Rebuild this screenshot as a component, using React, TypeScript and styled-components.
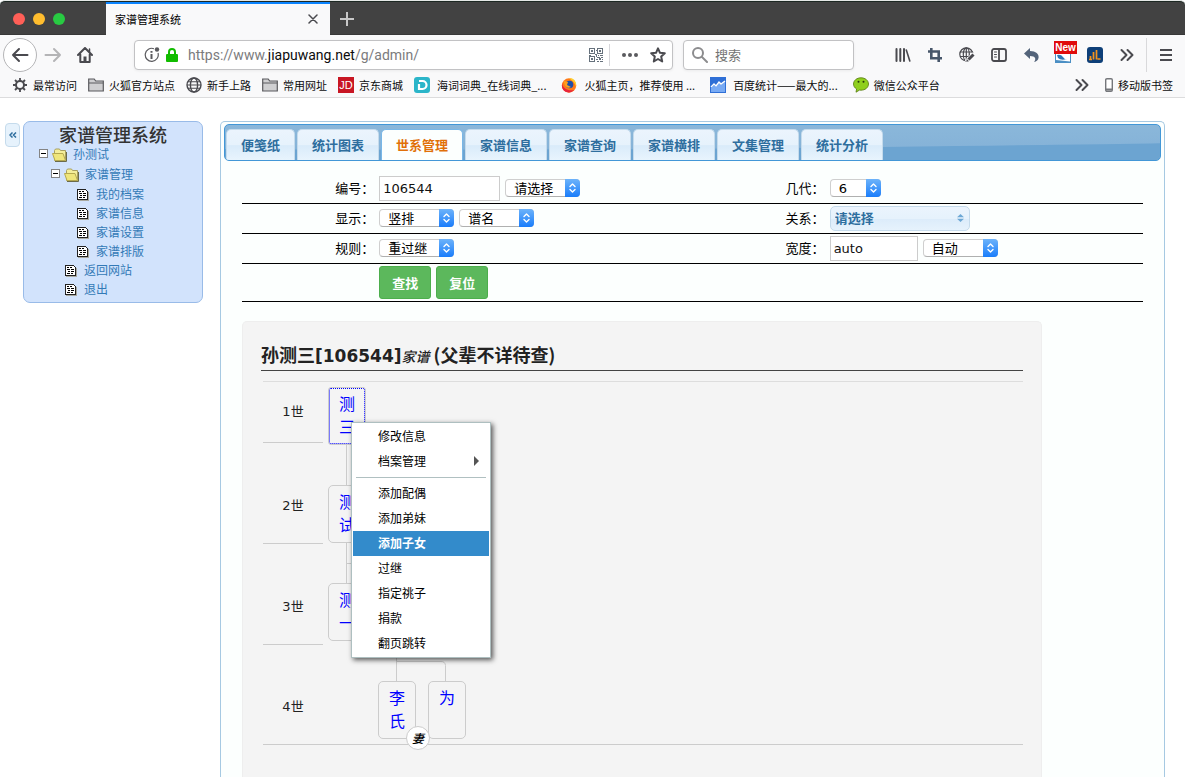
import React from "react";
import styled, { createGlobalStyle, css } from "styled-components";

const CJK = `"Noto Sans CJK SC", sans-serif`;
const TEXT = `"DejaVu Sans", "Noto Sans CJK SC", sans-serif`;
const INK = "#4a4a4f";

const GlobalStyle = createGlobalStyle`
  *, *::before, *::after { box-sizing: border-box; }
  body { margin: 0; background: #fff; color: #000; font: 13px/20px ${TEXT}; }
  button, input, select { font-family: inherit; margin: 0; }
  ul { list-style: none; margin: 0; padding: 0; }
  a { text-decoration: none; }
  svg { display: block; flex: none; }
`;

const Window = styled.div`
  min-height: 100vh;
  display: flex;
  flex-direction: column;
`;

/* ---------- browser chrome ---------- */

const TabStrip = styled.header`
  display: flex;
  height: 35px;
  padding-top: 1px;
  background: #424242;
  border-top: 1px solid #e4e8e6;
  border-radius: 5px 5px 0 0;
  box-shadow: inset 0 1px 0 #1d2823, inset 0 -1px 0 #383838;
`;

const Lights = styled.div`
  width: 106px;
  display: flex;
  align-items: center;
  gap: 8px;
  padding-left: 13px;
`;

const Light = styled.button<{ $color: string }>`
  width: 12px;
  height: 12px;
  padding: 0;
  border: 0;
  border-radius: 50%;
  background: ${(p) => p.$color};
`;

const BrowserTab = styled.div`
  width: 224px;
  display: flex;
  align-items: center;
  justify-content: space-between;
  padding: 0 12px 2px 9px;
  border-top: 2px solid #0a84ff;
  background: #f9f9fa;
  font: 11px/16px ${CJK};
`;

const PlainButton = styled.button<{ $width?: number }>`
  display: flex;
  align-items: center;
  justify-content: center;
  width: ${(p) => (p.$width ? `${p.$width}px` : "auto")};
  padding: 0;
  border: 0;
  background: none;
  color: ${INK};
`;

const Toolbar = styled.div`
  display: flex;
  align-items: center;
  height: 40px;
  padding-right: 3px;
  background: #f9f9fa;
`;

const NavGroup = styled.div`
  display: flex;
  align-items: center;
  width: 134px;
  padding-left: 3px;
`;

const BackButton = styled.button`
  display: flex;
  align-items: center;
  justify-content: center;
  width: 34px;
  height: 34px;
  padding: 0;
  border: 1px solid #b5b5b7;
  border-radius: 50%;
  background: #fff;
  color: ${INK};
`;

const Field = styled.div`
  display: flex;
  align-items: center;
  height: 30px;
  border: 1px solid #c2c2c4;
  border-radius: 4px;
  background: #fff;
  box-shadow: 0 1px 3px rgba(0, 0, 0, 0.06);
`;

const AddressField = styled(Field)`
  flex: 1;
  gap: 6px;
  padding: 0 6px 0 9px;
`;

const Address = styled.a`
  flex: 1;
  padding-left: 4px;
  color: #7b7b7d;
  font: 14px/20px "Roboto", "Liberation Sans", sans-serif;
  b { color: #0c0c0d; font-weight: 400; }
`;

const FieldRule = styled.span`
  width: 1px;
  height: 22px;
  background: #d7d7db;
`;

const SearchField = styled(Field)`
  width: 171px;
  margin-left: 10px;
  padding-left: 8px;
  gap: 7px;
`;

const SearchInput = styled.input`
  width: 100%;
  min-width: 0;
  padding: 0;
  border: 0;
  outline: 0;
  background: none;
  font: 13px/20px ${CJK};
  &::placeholder { color: #737373; opacity: 1; }
`;

const ToolGroup = styled.div`
  display: flex;
  align-items: center;
  padding-left: 33px;
`;

const ToolRule = styled.span`
  width: 1px;
  height: 34px;
  margin: 0 3px;
  background: #d9d9db;
`;

const BookmarkBar = styled.nav`
  display: flex;
  align-items: center;
  height: 23px;
  padding: 0 12px 2px;
  gap: 11px;
  background: #f9f9fa;
  border-bottom: 1px solid #dcdcdd;
  font: 11px/16px ${CJK};
  white-space: nowrap;
`;

const Bookmark = styled.a<{ $wide?: boolean }>`
  display: flex;
  align-items: center;
  gap: ${(p) => (p.$wide ? 7 : 5)}px;
  padding-right: ${(p) => (p.$wide ? 4 : 0)}px;
  color: #0c0c0d;
`;

const BookmarkEnd = styled.div`
  display: flex;
  align-items: center;
  gap: 16px;
  margin-left: auto;
`;

/* ---------- site ---------- */

const Site = styled.div`
  flex: 1;
  display: flex;
  padding: 23px 20px 0 5px;
`;

const Collapse = styled.button`
  width: 15px;
  height: 24px;
  margin: 2px 3px 0 0;
  padding: 0;
  border: 1px solid #c5dbec;
  border-radius: 4px;
  background: #e6f2fc;
  color: #2e6e9e;
  display: flex;
  align-items: center;
  justify-content: center;
`;

const Sidebar = styled.aside`
  width: 180px;
  align-self: flex-start;
  margin-right: 17px;
  padding: 2px 15px 4px;
  border: 1px solid #99bbe8;
  border-radius: 7px;
  background: #d2e3fc;
`;

const SidebarTitle = styled.h1`
  margin: 0;
  text-align: center;
  color: #333;
  font: 500 18px/20px ${CJK};
`;

const TreeRow = styled.div<{ $folder?: boolean }>`
  display: flex;
  align-items: center;
  height: 19px;
  margin-bottom: ${(p) => (p.$folder ? 1 : 0)}px;
  a { padding-left: 5px; color: #337ab7; font: 12px/19px ${CJK}; }
`;

const SubTree = styled.ul`
  padding-left: 12px;
`;

const Slot = styled.span<{ $width: number }>`
  display: flex;
  justify-content: center;
  width: ${(p) => p.$width}px;
  padding-top: 2px;
`;

const Expander = styled.button`
  width: 9px;
  height: 9px;
  margin-right: 4px;
  padding: 0;
  border: 1px solid #848484;
  background: linear-gradient(#000, #000) center / 5px 1px no-repeat #fff;
`;

const Main = styled.main`
  flex: 1;
  min-width: 0;
  display: flex;
  flex-direction: column;
  padding: 2px 3px 0;
  border: 1px solid #a6c9e2;
  border-bottom: 0;
  border-radius: 5px 5px 0 0;
  background: #fcfffe;
`;

const TabBar = styled.nav`
  position: relative;
  display: flex;
  align-items: flex-end;
  gap: 2px;
  height: 37px;
  padding-left: 1px;
  border: 1px solid #4297d7;
  border-radius: 5px;
  background: linear-gradient(#8ab7da, #86b3d8 60%, #76acd6);
  overflow: hidden;
`;

const Wave = styled.svg`
  position: absolute;
  inset: 0;
  width: 100%;
  height: 100%;
`;

const SiteTab = styled.button<{ $active?: boolean }>`
  position: relative;
  height: 31px;
  padding: 0 14px;
  border: 1px solid #c5dbec;
  border-bottom: 0;
  border-radius: 5px 5px 0 0;
  background: linear-gradient(#ebf4fd, #e6f2fc 50%, #d9ebfa 52%, #e8f4fd);
  color: #2e6e9e;
  font: bold 13px/20px ${CJK};
  ${(p) =>
    p.$active &&
    css`
      border-color: #79b7e7;
      background: #fcfffe;
      color: #e17009;
    `}
`;

const FormTable = styled.table`
  width: calc(100% - 36px);
  margin: 13px 18px 0;
  border-collapse: separate;
  border-spacing: 0;
  table-layout: fixed;
`;

const FormRow = styled.tr<{ $tall?: boolean }>`
  height: ${(p) => (p.$tall ? 38 : 30)}px;
`;

const LabelCell = styled.th`
  width: 15%;
  padding: 0 3px 0 0;
  border-bottom: 1px solid #000;
  text-align: right;
  font-weight: 400;
`;

const FieldCell = styled.td`
  padding: 0 0 0 2px;
  border-bottom: 1px solid #000;
`;

const Controls = styled.div`
  display: flex;
  align-items: center;
  gap: 5px;
`;

const TextBox = styled.input<{ $width: number }>`
  width: ${(p) => p.$width}px;
  height: 25px;
  padding: 0 3px;
  border: 1px solid #ccc;
  background: #fff;
  color: #111;
  font-size: 13px;
`;

const PickerBox = styled.span<{ $width: number }>`
  position: relative;
  display: flex;
  width: ${(p) => p.$width}px;
  padding-bottom: 1px;
`;

const PickerSelect = styled.select`
  appearance: none;
  width: 100%;
  height: 18px;
  padding: 1px 15px 0 8px;
  border: 1px solid #cfcfcf;
  border-bottom-color: #b0b0b0;
  border-radius: 4px;
  background: #fff;
  color: #000;
  font-size: 13px;
  line-height: 16px;
`;

const PickerCap = styled.span`
  position: absolute;
  top: 0;
  right: 0;
  width: 15px;
  height: 18px;
  display: flex;
  align-items: center;
  justify-content: center;
  border-radius: 0 4px 4px 0;
  background: linear-gradient(#6db3fa, #1a7dfb);
  pointer-events: none;
`;

const ThemedSelect = styled.select`
  appearance: none;
  width: 100%;
  height: 25px;
  padding: 0 4px;
  border: 1px solid #c5dbec;
  border-radius: 5px;
  background: linear-gradient(#ebf4fd, #e6f2fc 50%, #dcecfa 52%, #e6f2fc);
  color: #2e6e9e;
  font: bold 13px/20px ${CJK};
`;

const ThemedArrows = styled.svg`
  position: absolute;
  top: 8px;
  right: 6px;
  pointer-events: none;
`;

const ActionButton = styled.button`
  height: 33px;
  padding: 0 12px;
  border: 1px solid #4cae4c;
  border-radius: 3px;
  background: #5cb85c;
  color: #fff;
  font: bold 13px/20px ${CJK};
`;

/* ---------- family chart ---------- */

const Panel = styled.section`
  flex: 1;
  max-width: 800px;
  margin: 19px 18px 0;
  padding: 18px;
  border: 1px solid #eee;
  border-bottom: 0;
  border-radius: 5px 5px 0 0;
  background: #f4f4f4;
`;

const PanelTitle = styled.h2`
  margin: 0;
  height: 31px;
  border-bottom: 1px solid #444;
  color: #222;
  font: bold 18px/28px ${CJK};
  span { font: bold 17px/20px ${TEXT}; }
  em { font: italic 500 14px/20px ${CJK}; }
`;

const Chart = styled.div`
  display: flex;
  margin: 10px 0 0 2px;
  border-top: 1px solid #ddd;
  border-bottom: 1px solid #ccc;
`;

const Generations = styled.div`
  width: 60px;
  color: #222;
`;

const Generation = styled.div<{ $first?: boolean }>`
  display: flex;
  align-items: center;
  justify-content: center;
  height: ${(p) => (p.$first ? 61 : 101)}px;
  padding-top: ${(p) => (p.$first ? 0 : 25)}px;
  border-bottom: 1px solid #ccc;
  &:last-child { border-bottom: 0; height: 99px; }
`;

const Canvas = styled.div`
  position: relative;
  flex: 1;
`;

const Person = styled.a<{ $x: number; $y: number; $focused?: boolean }>`
  position: absolute;
  left: ${(p) => p.$x}px;
  top: ${(p) => p.$y}px;
  width: 38px;
  height: 58px;
  padding: 4px 10px;
  border: 1px solid #ccc;
  border-radius: 5px;
  color: #00f;
  font: 16px/23px ${CJK};
  ${(p) =>
    p.$focused &&
    css`
      border-radius: 3px;
      outline: 1px dotted #00f;
      outline-offset: -2px;
    `}
`;

const Spouse = styled.span`
  position: absolute;
  left: 83px;
  top: 344px;
  width: 24px;
  height: 24px;
  border: 1px solid #ccc;
  border-radius: 50%;
  background: #fff;
  text-align: center;
  font: italic 500 12px/22px ${CJK};
`;

const Menu = styled.ul`
  position: absolute;
  left: 28px;
  top: 40px;
  width: 140px;
  padding: 1px;
  border: 1px solid #aebfc0;
  background: #fff;
  box-shadow: 2px 2px 5px rgba(0, 0, 0, 0.65);
`;

const MenuItem = styled.button<{ $active?: boolean }>`
  display: flex;
  align-items: center;
  justify-content: space-between;
  width: 100%;
  height: 25px;
  padding: 0 10px 2px 25px;
  border: 0;
  background: ${(p) => (p.$active ? "#338bcb" : "none")};
  color: ${(p) => (p.$active ? "#fff" : "#000")};
  font: ${(p) => (p.$active ? "bold" : "400")} 12px/20px ${CJK};
`;

const MenuRule = styled.li`
  height: 1px;
  margin: 3px;
  background: #b0c0c1;
`;

/* ---------- icons ---------- */

const line = { fill: "none", stroke: "currentColor", strokeWidth: 2, strokeLinecap: "round" as const, strokeLinejoin: "round" as const };

const FolderOutline = () => (
  <svg width="16" height="16" viewBox="0 0 16 16">
    <path d="M.7 14V2h5.500l1.500 2h7.600v10z" fill="#cfcfd1" stroke="#5a5a5e" strokeWidth="1.200" />
    <path d="M1 6h14" stroke="#5a5a5e" />
  </svg>
);

const Globe = () => (
  <svg width="16" height="16" viewBox="0 0 16 16" fill="none" stroke={INK} strokeWidth="1.4">
    <circle cx="8" cy="8" r="7" />
    <ellipse cx="8" cy="8" rx="3.6" ry="7" />
    <path d="M2 4.800h12M1 8h14M2 11.200h12" strokeWidth="1.1" />
  </svg>
);

const Chevrons = () => (
  <svg width="14" height="14" viewBox="0 0 14 14" {...line}>
    <path d="M1.5 2L6.5 7l-5 5M7.5 2l5 5-5 5" />
  </svg>
);

const TreeFolder = () => (
  <svg width="16" height="14" viewBox="0 0 16 14">
    <path d="M3 13.5h11.5V4" fill="none" stroke="#6b6b4a" strokeWidth="1" />
    <path d="M2.5 12.5V2.5l1-1.5h4l1 1.5h5v10z" fill="#f4ee9a" stroke="#a8a060" />
    <path d="M.5 5.5h10.5l2.5 7H3z" fill="#efe67c" stroke="#b5a951" />
  </svg>
);

const TreeDoc = () => (
  <svg width="12" height="12" viewBox="0 0 12 12" shapeRendering="crispEdges">
    <path d="M1 11h10V3h1v9H1z" fill="#a9a9a0" />
    <path d="M.5.5h8l2 2v8H.5z" fill="#fff" stroke="#222" />
    <path d="M2 2.500h2M5 2.500h2M2 4.500h3M6 4.500h3M3 6.500h2M6 6.500h3M2 8.500h3M6 8.500h2" stroke="#000" />
  </svg>
);

const UpDown = () => (
  <svg width="7" height="10" viewBox="0 0 7 10" fill="none" stroke="#fff" strokeWidth="1.4" strokeLinecap="round" strokeLinejoin="round">
    <path d="M1 3.4L3.5 1 6 3.4M1 6.6L3.5 9 6 6.6" />
  </svg>
);

const QrCode = () => (
  <svg width="14" height="14" viewBox="0 0 14 14" fill="none" stroke="#66717c" shapeRendering="crispEdges">
    <path d="M.5.5h5v5h-5zM8.500.5h5v5h-5zM.5 8.500h5v5h-5z" />
    <path d="M2 3h2M10 3h2M2 11h2" strokeWidth="2" />
    <path d="M7.500 7v2M9 7.500h1M11 7.500h3M8 9.500h3M12 9.500h2M7 11.500h2M10 11.500h2M13 11.500h1M8 13.500h2M11 13.500h3M7 2.500h1M6 6.500h2M0 7h2M10 10.500h2" />
  </svg>
);

/* ---------- pieces ---------- */

function Picker({ label, value, width }: { label: string; value: string; width: number }) {
  return (
    <PickerBox $width={width}>
      <PickerSelect aria-label={label} defaultValue={value}>
        <option>{value}</option>
      </PickerSelect>
      <PickerCap>
        <UpDown />
      </PickerCap>
    </PickerBox>
  );
}

function Leaf({ children }: { children: string }) {
  return (
    <li>
      <TreeRow>
        <Slot $width={12} />
        <Slot $width={16}>
          <TreeDoc />
        </Slot>
        <a href="#">{children}</a>
      </TreeRow>
    </li>
  );
}

function Folder({ name, children }: { name: string; children: React.ReactNode }) {
  return (
    <li>
      <TreeRow $folder>
        <Expander aria-label={`收起${name}`} />
        <Slot $width={16}>
          <TreeFolder />
        </Slot>
        <a href="#">{name}</a>
      </TreeRow>
      <SubTree>{children}</SubTree>
    </li>
  );
}

function Chrome() {
  return (
    <>
      <TabStrip>
        <Lights>
          <Light $color="#ff5f57" aria-label="关闭窗口" />
          <Light $color="#ffbd2e" aria-label="最小化" />
          <Light $color="#28ca42" aria-label="缩放" />
        </Lights>
        <BrowserTab>
          家谱管理系统
          <PlainButton aria-label="关闭标签页">
            <svg width="10" height="10" viewBox="0 0 10 10" {...line} strokeWidth={1.5}>
              <path d="M1 1l8 8M9 1L1 9" />
            </svg>
          </PlainButton>
        </BrowserTab>
        <PlainButton $width={34} aria-label="新标签页">
          <svg width="14" height="14" viewBox="0 0 14 14" stroke="#c8c8c8" strokeWidth="2">
            <path d="M7 0v14M0 7h14" />
          </svg>
        </PlainButton>
      </TabStrip>
      <Toolbar>
        <NavGroup>
          <BackButton aria-label="后退">
            <svg width="18" height="16" viewBox="0 0 18 16" {...line}>
              <path d="M16.500 8H2M8 2L2 8l6 6" />
            </svg>
          </BackButton>
          <PlainButton $width={32} aria-label="前进">
            <svg width="18" height="16" viewBox="0 0 18 16" {...line} stroke="#b4b4b6">
              <path d="M1.500 8H16M10 2l6 6-6 6" />
            </svg>
          </PlainButton>
          <PlainButton $width={32} aria-label="主页">
            <svg width="16" height="16" viewBox="0 0 16 16" {...line}>
              <path d="M1 8l7-7 7 7M3.300 7.500V15h9.400V7.500" />
              <path d="M8 9.500V14" strokeWidth="3" strokeLinecap="butt" />
              <path d="M12.500 2v3" strokeWidth="1.500" />
            </svg>
          </PlainButton>
        </NavGroup>
        <AddressField>
          <svg width="16" height="16" viewBox="0 0 16 16" fill="none" stroke="#5a5a5e">
            <path d="M10 1.700A6.500 6.500 0 1 0 14 6" strokeWidth="1.200" />
            <circle cx="13" cy="2.500" r="2.200" fill="#5a5a5e" stroke="none" />
            <path d="M7.500 7v5M7.500 4v1.700" strokeWidth="2" />
          </svg>
          <svg width="12" height="14" viewBox="0 0 12 14">
            <path d="M3 7V4a3 3 0 0 1 6 0v3" fill="none" stroke="#12bc00" strokeWidth="2" />
            <rect y="6" width="12" height="8" rx="1" fill="#12bc00" />
          </svg>
          <Address href="#">
            https://www.<b>jiapuwang.net</b>/g/admin/
          </Address>
          <QrCode />
          <FieldRule />
          <PlainButton $width={28} aria-label="页面操作">
            <svg width="16" height="4" viewBox="0 0 16 4" fill="#5a5a5e">
              <circle cx="2" cy="2" r="2" />
              <circle cx="8" cy="2" r="2" />
              <circle cx="14" cy="2" r="2" />
            </svg>
          </PlainButton>
          <PlainButton aria-label="收藏">
            <svg width="16" height="16" viewBox="0 0 16 16" {...line}>
              <path d="M8 1.300l2 4.500 4.800.5-3.600 3.300 1 4.900L8 12l-4.200 2.500 1-4.900L1.200 6.300 6 5.800z" />
            </svg>
          </PlainButton>
        </AddressField>
        <SearchField>
          <svg width="16" height="16" viewBox="0 0 16 16" {...line} stroke="#8c8c8e">
            <circle cx="6" cy="6" r="5" />
            <path d="M10 10l5 5" />
          </svg>
          <SearchInput aria-label="搜索" placeholder="搜索" />
        </SearchField>
        <ToolGroup>
          <PlainButton $width={32} aria-label="我的足迹">
            <svg width="16" height="14" viewBox="0 0 16 14" {...line}>
              <path d="M1.500 1v12M5.300 1v12M9 1v12" />
              <path d="M11.300 2l3.500 11" strokeWidth="1.600" />
            </svg>
          </PlainButton>
          <PlainButton $width={32} aria-label="截图">
            <svg width="14" height="14" viewBox="0 0 14 14" fill="none" stroke="#47566a" strokeWidth="2.600">
              <path d="M3.300 0v10.300H14M0 3.500h10.700V14" />
            </svg>
          </PlainButton>
          <PlainButton $width={32} aria-label="网页工具">
            <svg width="16" height="16" viewBox="0 0 16 16" fill="none" stroke={INK} strokeWidth="1.200">
              <circle cx="7.300" cy="7.300" r="6.500" />
              <ellipse cx="7.300" cy="7.300" rx="3" ry="6.500" />
              <path d="M7.300 1v13M1 5h12.600M1 9.500h12.600" />
              <path d="M7.500 15l8-8" stroke="#f9f9fa" strokeWidth="5" />
              <path d="M9.500 12.500l5-5" strokeWidth="3" />
              <path d="M7.300 14.700l.5-2.700 2.200 2.200z" fill={INK} stroke="none" />
            </svg>
          </PlainButton>
          <PlainButton $width={32} aria-label="侧栏">
            <svg width="16" height="14" viewBox="0 0 16 14" {...line} strokeWidth={1.800}>
              <rect x="1" y="1" width="14" height="12" rx="2" />
              <path d="M8 1v12" />
              <path d="M3.500 4h2M3.500 6.500h2M3.500 9h2" strokeWidth="1" />
            </svg>
          </PlainButton>
          <PlainButton $width={32} aria-label="撤销">
            <svg width="15" height="14" viewBox="0 0 15 14" fill="#54647a">
              <path d="M6 0v3c6 0 9 3 8.600 6.500C14.400 12 12.500 13.700 10 14c2.500-3 1.500-6-4-6v3L0 5.500z" />
            </svg>
          </PlainButton>
          <PlainButton $width={32} aria-label="新扩展">
            <svg width="27" height="28" viewBox="-4 0 27 28">
              <rect x="1.500" y="8.500" width="15" height="13" fill="#fff" stroke="#4b8fc4" />
              <path d="M3 14q4-1 6 2t4 2q-6 2-9-1z" fill="#2f78b4" />
              <path d="M2 19l14 1.500v1H2z" fill="#4b8fc4" />
              <rect width="23" height="13" fill="#e00b0b" />
              <text x="11.500" y="10" textAnchor="middle" fill="#fff" fontFamily="Liberation Sans" fontWeight="bold" fontSize="10">
                New
              </text>
            </svg>
          </PlainButton>
          <PlainButton $width={32} aria-label="统计">
            <svg width="16" height="16" viewBox="0 0 16 16">
              <rect width="16" height="16" rx="3" fill="#0e3f78" />
              <path d="M3.500 12.500V9M6.500 12.500V5M9.500 12.500V3M10.500 12h3M2 12.500h3" stroke="#f7941d" strokeWidth="1.700" />
            </svg>
          </PlainButton>
          <PlainButton $width={32} aria-label="更多工具">
            <Chevrons />
          </PlainButton>
          <ToolRule />
          <PlainButton $width={32} aria-label="菜单">
            <svg width="12" height="12" viewBox="0 0 12 12" stroke={INK} strokeWidth="2">
              <path d="M0 1h12M0 6h12M0 11h12" />
            </svg>
          </PlainButton>
        </ToolGroup>
      </Toolbar>
      <BookmarkBar>
        <Bookmark href="#">
          <svg width="16" height="16" viewBox="0 0 16 16" fill="none" stroke={INK}>
            <circle cx="8" cy="8" r="4" strokeWidth="2" />
            <path d="M8 1v3M8 12v3M1 8h3M12 8h3M3 3l2 2M11 11l2 2M13 3l-2 2M5 11l-2 2" strokeWidth="1.800" />
          </svg>
          最常访问
        </Bookmark>
        <Bookmark href="#"><FolderOutline />火狐官方站点</Bookmark>
        <Bookmark href="#"><Globe />新手上路</Bookmark>
        <Bookmark href="#"><FolderOutline />常用网址</Bookmark>
        <Bookmark href="#">
          <svg width="16" height="16" viewBox="0 0 16 16">
            <rect width="16" height="16" fill="#c81623" />
            <text x="8" y="12" textAnchor="middle" fill="#fff" fontFamily="Liberation Sans" fontSize="11">JD</text>
          </svg>
          京东商城
        </Bookmark>
        <Bookmark href="#" $wide>
          <svg width="16" height="16" viewBox="0 0 16 16">
            <rect width="16" height="16" rx="3" fill="#2bb5c9" />
            <path d="M5 4h3.500a4 4 0 0 1 0 8H5V7" fill="none" stroke="#fff" strokeWidth="2.200" />
          </svg>
          海词词典_在线词典_...
        </Bookmark>
        <Bookmark href="#" $wide>
          <svg width="16" height="16" viewBox="0 0 16 16">
            <circle cx="8" cy="8.500" r="7.200" fill="#ff7a18" />
            <path d="M8 1c6 0 8 5 7 9-1-5-4-6-7-9z" fill="#ffd02e" />
            <path d="M1 6c1 6 6 8 12 7-3 4-11 3-12-3z" fill="#e8243c" />
            <circle cx="8.500" cy="7.500" r="3.800" fill="#1f4fa8" />
            <path d="M3 4l4 1-1 3 4 2c-3 2-7 0-7-6z" fill="#ffa01e" />
          </svg>
          火狐主页，推荐使用 ...
        </Bookmark>
        <Bookmark href="#" $wide>
          <svg width="16" height="16" viewBox="0 0 16 16">
            <rect width="16" height="16" fill="#2f6fd6" />
            <path d="M1 11l3-3 2 2 3-4 2 2 4-4v11H1z" fill="#78aaf4" />
            <path d="M1 10l3-3 2 2 3-4 2 2 4-3" fill="none" stroke="#fff" strokeWidth="1.400" />
          </svg>
          百度统计——最大的...
        </Bookmark>
        <Bookmark href="#">
          <svg width="16" height="16" viewBox="0 0 16 16">
            <path d="M8 .8c4.200 0 7.500 2.700 7.500 6.200S12.200 13.200 8 13.200l-1.500-.1L3 15.200l.6-3.200C1.700 10.900.5 9.100.5 7 .5 3.500 3.800.8 8 .8z" fill="#8fcf1e" stroke="#56790f" strokeWidth=".8" />
            <circle cx="5.500" cy="4.800" r="1" fill="#25380a" />
            <circle cx="10.500" cy="4.800" r="1" fill="#25380a" />
          </svg>
          微信公众平台
        </Bookmark>
        <BookmarkEnd>
          <PlainButton aria-label="更多书签"><Chevrons /></PlainButton>
          <Bookmark href="#">
            <svg width="8" height="14" viewBox="0 0 8 14">
              <rect x=".7" y=".7" width="6.600" height="12.600" rx="1.200" fill="#fff" stroke="#75777b" strokeWidth="1.400" />
              <path d="M1 11.500h6" stroke="#75777b" strokeWidth="2" />
            </svg>
            移动版书签
          </Bookmark>
        </BookmarkEnd>
      </BookmarkBar>
    </>
  );
}

const TABS = ["便笺纸", "统计图表", "世系管理", "家谱信息", "家谱查询", "家谱横排", "文集管理", "统计分析"];

function SearchForm() {
  return (
    <FormTable>
      <tbody>
        <FormRow>
          <LabelCell scope="row"><label htmlFor="code">编号：</label></LabelCell>
          <FieldCell as="td" width="35%">
            <Controls>
              <TextBox id="code" $width={121} defaultValue="106544" />
              <Picker label="编号类型" value="请选择" width={75} />
            </Controls>
          </FieldCell>
          <LabelCell scope="row">几代：</LabelCell>
          <FieldCell><Picker label="几代" value="6" width={51} /></FieldCell>
        </FormRow>
        <FormRow>
          <LabelCell scope="row">显示：</LabelCell>
          <FieldCell>
            <Controls>
              <Picker label="排列" value="竖排" width={75} />
              <Picker label="名称" value="谱名" width={75} />
            </Controls>
          </FieldCell>
          <LabelCell scope="row"><label htmlFor="relation">关系：</label></LabelCell>
          <FieldCell>
            <PickerBox $width={140}>
              <ThemedSelect id="relation"><option>请选择</option></ThemedSelect>
              <ThemedArrows width="7" height="8" viewBox="0 0 7 8" fill="#6da8d5">
                <path d="M0 3.300L3.500 0 7 3.300zM0 4.700L3.500 8 7 4.700z" />
              </ThemedArrows>
            </PickerBox>
          </FieldCell>
        </FormRow>
        <FormRow>
          <LabelCell scope="row">规则：</LabelCell>
          <FieldCell><Picker label="规则" value="重过继" width={75} /></FieldCell>
          <LabelCell scope="row"><label htmlFor="width">宽度：</label></LabelCell>
          <FieldCell>
            <Controls>
              <TextBox id="width" $width={88} defaultValue="auto" />
              <Picker label="宽度方式" value="自动" width={75} />
            </Controls>
          </FieldCell>
        </FormRow>
        <FormRow $tall>
          <LabelCell />
          <FieldCell colSpan={3}>
            <Controls>
              <ActionButton>查找</ActionButton>
              <ActionButton>复位</ActionButton>
            </Controls>
          </FieldCell>
        </FormRow>
      </tbody>
    </FormTable>
  );
}

function FamilyChart() {
  return (
    <Panel>
      <PanelTitle>
        孙测三<span>[106544]</span><em>家谱</em> (父辈不详待查)
      </PanelTitle>
      <Chart>
        <Generations>
          <Generation $first>1世</Generation>
          <Generation>2世</Generation>
          <Generation>3世</Generation>
          <Generation>4世</Generation>
        </Generations>
        <Canvas>
          <svg width="150" height="360" viewBox="0 0 150 360" fill="none" stroke="#ccc">
            <path d="M23.500 63v40M23.500 161v40M23.500 181.500H73.500V300M73.500 279.500H118a4 4 0 0 1 4.500 4V300" />
          </svg>
          <Person href="#" $x={5} $y={5} $focused>测三</Person>
          <Person href="#" $x={5} $y={103}>测试</Person>
          <Person href="#" $x={5} $y={201}>测一</Person>
          <Person href="#" $x={55} $y={299}>李氏</Person>
          <Person href="#" $x={105} $y={299}>为</Person>
          <Spouse>妻</Spouse>
          <Menu>
            <li><MenuItem>修改信息</MenuItem></li>
            <li>
              <MenuItem>
                档案管理
                <svg width="5" height="10" viewBox="0 0 5 10" fill="#555"><path d="M0 0l5 5-5 5z" /></svg>
              </MenuItem>
            </li>
            <MenuRule role="separator" />
            <li><MenuItem>添加配偶</MenuItem></li>
            <li><MenuItem>添加弟妹</MenuItem></li>
            <li><MenuItem $active>添加子女</MenuItem></li>
            <li><MenuItem>过继</MenuItem></li>
            <li><MenuItem>指定祧子</MenuItem></li>
            <li><MenuItem>捐款</MenuItem></li>
            <li><MenuItem>翻页跳转</MenuItem></li>
          </Menu>
        </Canvas>
      </Chart>
    </Panel>
  );
}

export default function App() {
  return (
    <Window>
      <GlobalStyle />
      <Chrome />
      <Site>
        <Collapse aria-label="收起侧栏">
          <svg width="8" height="6" viewBox="0 0 8 6" fill="none" stroke="currentColor" strokeWidth="1.500">
            <path d="M3.500.5L1 3l2.500 2.500M7 .5L4.500 3 7 5.500" />
          </svg>
        </Collapse>
        <Sidebar>
          <SidebarTitle>家谱管理系统</SidebarTitle>
          <ul>
            <Folder name="孙测试">
              <Folder name="家谱管理">
                <Leaf>我的档案</Leaf>
                <Leaf>家谱信息</Leaf>
                <Leaf>家谱设置</Leaf>
                <Leaf>家谱排版</Leaf>
              </Folder>
              <Leaf>返回网站</Leaf>
              <Leaf>退出</Leaf>
            </Folder>
          </ul>
        </Sidebar>
        <Main>
          <TabBar>
            <Wave viewBox="0 0 937 35" preserveAspectRatio="none">
              <path d="M0 24Q330 26 660 22T937 18V35H0z" fill="#6ca4d1" />
            </Wave>
            {TABS.map((name) => (
              <SiteTab key={name} $active={name === "世系管理"}>{name}</SiteTab>
            ))}
          </TabBar>
          <SearchForm />
          <FamilyChart />
        </Main>
      </Site>
    </Window>
  );
}
